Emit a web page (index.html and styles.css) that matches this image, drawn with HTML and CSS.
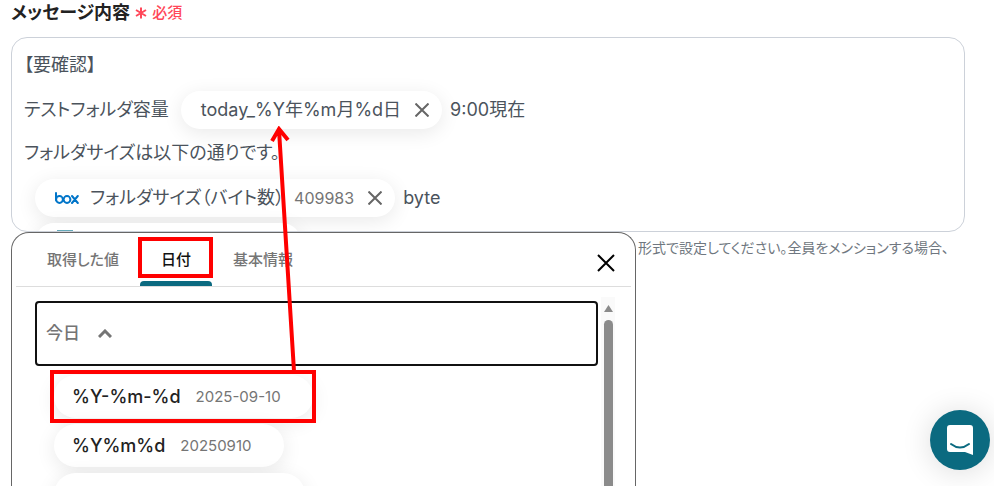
FILE: index.html
```
<!DOCTYPE html>
<html lang="ja">
<head>
    <meta charset="UTF-8">
    <meta name="viewport" content="width=device-width, initial-scale=1.0">
    <title>メッセージ内容</title>
    <link rel="stylesheet" href="styles.css">
</head>
<body>
    <main class="page">
        <div class="field">
            <div class="field-label">
                <span id="message-label">メッセージ内容</span>
                <svg class="asterisk" viewBox="0 0 12 12" aria-hidden="true"><path d="M6 0.5v11M1 3l10 6M11 3L1 9"/></svg>
                <span class="required">必須</span>
            </div>
            <div class="editor" role="textbox" aria-multiline="true" aria-labelledby="message-label" contenteditable="true" spellcheck="false">
                <div class="line">【要確認】</div>
                <div class="line line-chip">
                    <span>テストフォルダ容量</span>
                    <span class="chip" contenteditable="false">
                        <span>today_%Y年%m月%d日</span>
                        <button class="chip-remove" type="button" aria-label="削除"><svg viewBox="0 0 14 14"><path d="M0.5 0.5l13 13M13.5 0.5l-13 13"/></svg></button>
                    </span>
                    <span>9:00現在</span>
                </div>
                <div class="line">フォルダサイズは以下の通りです。</div>
                <div class="line line-chip line-indent">
                    <span class="chip" contenteditable="false">
                        <svg class="box-logo" viewBox="0 0 24 12" role="img" aria-label="box">
                            <path d="M1 1v7"/>
                            <circle cx="4.5" cy="7.5" r="3.4"/>
                            <circle cx="12" cy="7.5" r="3.4"/>
                            <path d="M17 4l5.8 7M22.8 4L17 11"/>
                        </svg>
                        <span class="chip-name">フォルダサイズ（バイト数）</span>
                        <span class="chip-value">409983</span>
                        <button class="chip-remove" type="button" aria-label="削除"><svg viewBox="0 0 14 14"><path d="M0.5 0.5l13 13M13.5 0.5l-13 13"/></svg></button>
                    </span>
                    <span>byte</span>
                </div>
                <div class="line line-chip line-indent">
                    <span class="chip chip-next" contenteditable="false"><span class="app-icon"></span></span>
                </div>
            </div>
            <p class="help">形式で設定してください。全員をメンションする場合、</p>
        </div>

        <section class="picker">
            <div class="picker-head">
                <div class="tabs" role="tablist">
                    <button class="tab" role="tab" type="button">取得した値</button>
                    <button class="tab active" role="tab" type="button" aria-selected="true">日付</button>
                    <button class="tab" role="tab" type="button">基本情報</button>
                </div>
                <button class="close" type="button" aria-label="閉じる"><svg viewBox="0 0 18 18"><path d="M1 1l16 16M17 1L1 17"/></svg></button>
            </div>
            <div class="picker-body">
                <div class="list">
                    <button class="group" type="button" aria-expanded="true">
                        今日
                        <svg viewBox="0 0 14 9"><path d="M1 8l6-6 6 6"/></svg>
                    </button>
                    <div class="options">
                        <button class="option" type="button"><b>%Y-%m-%d</b><span>2025-09-10</span></button>
                        <button class="option" type="button"><b>%Y%m%d</b><span>20250910</span></button>
                        <button class="option option-next" type="button"></button>
                    </div>
                </div>
                <div class="scrollbar">
                    <svg viewBox="0 0 9 7"><path d="M4.5 0L9 7H0z"/></svg>
                    <div class="thumb"></div>
                </div>
            </div>
        </section>

        <div class="mark mark-tab"></div>
        <div class="mark mark-option"></div>
        <svg class="arrow" viewBox="0 0 30 246" aria-hidden="true"><path d="M24 245L9 4M2 15L9 3l9 11"/></svg>

        <button class="chat" type="button" aria-label="チャット">
            <svg viewBox="0 0 26 30"><path class="bubble" d="M3 0h20a3 3 0 0 1 3 3v27l-8-3H3a3 3 0 0 1-3-3V3a3 3 0 0 1 3-3z"/><path class="smile" d="M4 19q9 7 18 0"/></svg>
        </button>
    </main>
</body>
</html>
```
FILE: styles.css
```
* {
    box-sizing: border-box;
}

body {
    margin: 0;
    background: #fff;
    color: #4b535c;
    font-family: Inter, "Noto Sans CJK JP", sans-serif;
    font-feature-settings: "palt";
    font-size: 18px;
    line-height: 24px;
}

button {
    margin: 0;
    padding: 0;
    border: none;
    background: none;
    color: inherit;
    font: inherit;
    font-feature-settings: inherit;
    cursor: pointer;
}

svg {
    display: block;
    fill: none;
    stroke: currentColor;
}

.page {
    position: relative;
    height: 100vh;
    overflow: hidden;
}

.field {
    padding: 1px 29px 0 11px;
}

.field-label {
    display: flex;
    align-items: center;
    gap: 5px;
    height: 24px;
    margin-bottom: 12px;
    color: #222;
    font-weight: 600;
}

.asterisk {
    width: 12px;
    height: 12px;
    color: #ff4759;
    stroke-width: 2;
}

.required {
    color: #ff4759;
    font-size: 15px;
    font-weight: 500;
}

/* message editor */
.editor {
    height: 195px;
    padding: 15px 12px;
    border: 1px solid #ccd1d9;
    border-radius: 16px;
    overflow: hidden;
    outline: none;
}

.line {
    white-space: nowrap;
}

.line-chip {
    display: flex;
    align-items: center;
    gap: 8px;
    height: 38px;
    margin: 14px 0 12px;
}

.line + .line-indent {
    margin: 14px 0 6px;
    padding-left: 11px;
}

.line-indent + .line-indent {
    margin-top: 6px;
}

.chip {
    display: flex;
    align-items: center;
    height: 38px;
    padding: 0 13px 0 20px;
    border-radius: 19px;
    background: #fff;
    box-shadow: 0 4px 20px rgba(0, 0, 0, 0.09);
}

.line > span:first-child:not(.chip) {
    margin-right: 4px;
}

.chip-remove {
    margin-left: 14px;
    color: #666;
}

.chip-remove svg {
    width: 14px;
    height: 14px;
    stroke-width: 2;
}

.chip-value {
    margin-left: 10px;
    color: #757575;
    font-size: 16px;
}

.chip-next {
    align-items: flex-start;
    width: 266px;
}

.app-icon {
    width: 16px;
    height: 16px;
    margin: 7px 2px;
    background: #65a9b9;
}

.box-logo {
    width: 24px;
    height: 12px;
    margin-right: 11px;
    color: #0075c9;
    stroke-width: 2;
    stroke-linecap: round;
}

.help {
    margin: 4px 16px 0 0;
    color: #6f7780;
    font-size: 14px;
    text-align: right;
}

/* value picker */
.picker {
    position: absolute;
    top: 232px;
    bottom: 0;
    left: 11px;
    display: flex;
    flex-direction: column;
    width: 625px;
    padding: 0 4px;
    border: 1px solid #666;
    border-bottom: none;
    border-radius: 18px 18px 0 0;
    background: #fff;
    overflow: hidden;
}

.picker-head {
    display: flex;
    justify-content: space-between;
    align-items: center;
    flex: none;
    height: 54px;
    padding: 0 16px 0 10px;
    border-bottom: 1px solid #ddd;
}

.tabs {
    display: flex;
    align-self: stretch;
}

.tab {
    padding: 0 21px;
    color: #757575;
    font-size: 15px;
    font-weight: 500;
}

.tab.active {
    position: relative;
    color: #111;
}

.tab.active::after {
    content: "";
    position: absolute;
    right: 0;
    bottom: 0;
    left: 0;
    height: 5px;
    border-radius: 4px 4px 0 0;
    background: #0b6a80;
}

.close {
    margin-top: 6px;
    color: #000;
}

.close svg {
    width: 18px;
    height: 18px;
    stroke-width: 2;
}

.picker-body {
    display: flex;
    flex: 1;
    gap: 3px;
    min-height: 0;
    padding: 10px 16px 0 19px;
}

.list {
    flex: 1;
    padding-top: 4px;
}

.group {
    display: flex;
    align-items: center;
    gap: 18px;
    width: 100%;
    height: 65px;
    padding: 0 9px 2px;
    border: 2px solid #111;
    border-radius: 4px;
    color: #757575;
    font-size: 17px;
    font-weight: 500;
}

.group svg {
    width: 14px;
    height: 9px;
    margin-top: 2px;
    stroke-width: 3;
}

.options {
    display: flex;
    flex-direction: column;
    align-items: flex-start;
    gap: 6px;
    padding: 9px 19px;
}

.option {
    display: flex;
    align-items: center;
    gap: 15px;
    height: 43px;
    padding: 0 32px 0 18px;
    border-radius: 22px;
    background: #fff;
    box-shadow: 0 4px 20px rgba(0, 0, 0, 0.09);
    color: #222;
}

.option b {
    font-weight: 500;
}

.option span {
    color: #757575;
    font-size: 15px;
}

.option-next {
    width: 251px;
}

.scrollbar {
    display: flex;
    flex-direction: column;
    align-items: center;
    gap: 8px;
    width: 14px;
    padding-top: 8px;
    background: #fafafa;
}

.scrollbar svg {
    width: 9px;
    height: 7px;
    fill: #8b8b8b;
    stroke: none;
}

.thumb {
    flex: 1;
    width: 9px;
    border-radius: 5px 5px 0 0;
    background: #8b8b8b;
}

/* red callouts */
.mark {
    position: absolute;
    border: 4px solid #f00;
    pointer-events: none;
}

.mark-tab {
    top: 237px;
    left: 138px;
    width: 75px;
    height: 41px;
}

.mark-option {
    top: 370px;
    left: 50px;
    width: 266px;
    height: 53px;
}

.arrow {
    position: absolute;
    top: 126px;
    left: 270px;
    width: 30px;
    height: 246px;
    color: #f00;
    stroke-width: 4;
    pointer-events: none;
}

.chat {
    position: absolute;
    right: 4px;
    bottom: 16px;
    display: flex;
    align-items: center;
    justify-content: center;
    width: 60px;
    height: 60px;
    border-radius: 50%;
    background: #0b6a80;
    box-shadow: 0 2px 30px rgba(0, 0, 0, 0.14);
}

.chat svg {
    width: 26px;
    height: 30px;
}

.bubble {
    fill: #fff;
    stroke: none;
}

.smile {
    stroke: #0b6a80;
    stroke-width: 2;
    stroke-linecap: round;
}
```
